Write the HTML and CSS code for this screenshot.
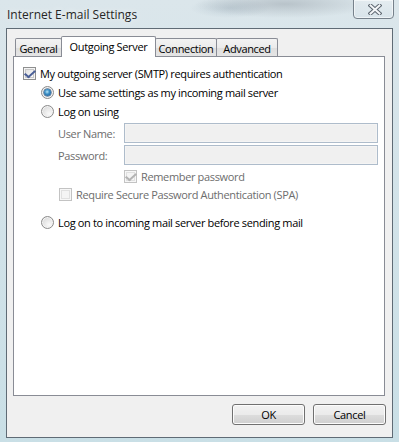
FILE: index.html
```html
<!DOCTYPE html>
<html>
<head>
<meta charset="utf-8">
<title>Internet E-mail Settings</title>
<link rel="stylesheet" href="styles.css">
</head>
<body>
<div class="window">
  <div class="titlebar">
    <span class="title">Internet E-mail Settings</span>
    <div class="close">
      <svg width="14" height="11" viewBox="0 0 14 11">
        <path d="M2.5 1.5 L11.5 9.5 M11.5 1.5 L2.5 9.5" stroke="#5d6670" stroke-width="4" stroke-linecap="square" fill="none"/>
        <path d="M2.5 1.5 L11.5 9.5 M11.5 1.5 L2.5 9.5" stroke="#f4f6f8" stroke-width="2" stroke-linecap="square" fill="none"/>
      </svg>
    </div>
  </div>
  <div class="client">
    <div class="tabs">
      <div class="tab t-general">General</div>
      <div class="tab active t-outgoing">Outgoing Server</div>
      <div class="tab t-connection">Connection</div>
      <div class="tab t-advanced">Advanced</div>
    </div>
    <div class="panel">
      <div class="row r-auth">
        <span class="cb checked"></span>
        <span class="label">My outgoing server (SMTP) requires authentication</span>
      </div>
      <div class="row r-radio">
        <span class="radio on"></span>
        <span class="label">Use same settings as my incoming mail server</span>
      </div>
      <div class="row r-radio">
        <span class="radio"></span>
        <span class="label">Log on using</span>
      </div>
      <div class="field">
        <span class="flabel">User Name:</span>
        <span class="input"></span>
      </div>
      <div class="field">
        <span class="flabel">Password:</span>
        <span class="input"></span>
      </div>
      <div class="row r-remember disabled">
        <span class="cb checked dis"></span>
        <span class="label">Remember password</span>
      </div>
      <div class="row r-spa disabled">
        <span class="cb dis"></span>
        <span class="label">Require Secure Password Authentication (SPA)</span>
      </div>
      <div class="row r-radio r-last">
        <span class="radio"></span>
        <span class="label">Log on to incoming mail server before sending mail</span>
      </div>
    </div>
    <div class="buttons">
      <div class="btn">OK</div>
      <div class="btn">Cancel</div>
    </div>
  </div>
</div>
</body>
</html>
```

FILE: styles.css
```css
* { box-sizing: border-box; }
html, body { margin: 0; padding: 0; }
body {
  width: 399px;
  height: 442px;
  overflow: hidden;
  font-family: "Open Sans", "Noto Sans", sans-serif;
  font-size: 11px;
  letter-spacing: -0.35px;
  color: #000;
}
.window {
  width: 399px;
  height: 442px;
  padding: 0 6px 4px 6px;
  display: flex;
  flex-direction: column;
  background:
    radial-gradient(ellipse 90px 14px at 285px 4px, rgba(120,130,140,0.35), rgba(120,130,140,0) 100%),
    radial-gradient(ellipse 40px 10px at 230px 8px, rgba(140,160,175,0.3), rgba(140,160,175,0) 100%),
    linear-gradient(to bottom, #dbe6eb 0%, #d3e3e9 40%, #c9dfe6 100%);
}
.titlebar {
  height: 28px;
  flex: none;
  display: flex;
  justify-content: space-between;
  align-items: flex-start;
}
.title {
  margin-top: 6px;
  margin-left: 1px;
  font-size: 12px;
  letter-spacing: 0;
  color: #262626;
  text-shadow: 0 0 6px rgba(255,255,255,0.9);
}
.close {
  width: 41px;
  height: 20px;
  margin-top: -1px;
  margin-right: -1px;
  border: 1px solid #76818b;
  border-radius: 0 0 4px 4px;
  background: linear-gradient(to bottom, rgba(235,241,245,0.6), rgba(215,226,233,0.6));
  box-shadow: inset 0 0 0 1px rgba(255,255,255,0.55);
  display: flex;
  align-items: center;
  justify-content: center;
  padding-left: 2px;
  padding-top: 1px;
}
.close svg { display: block; }
.client {
  flex: 1;
  border: 1px solid #5f6b75;
  background: #f0f0f0;
  padding: 7px 7px 12px 6px;
  display: flex;
  flex-direction: column;
}
.tabs {
  display: flex;
  align-items: flex-start;
  height: 21px;
  margin-bottom: -1px;
  padding-left: 2px;
  position: relative;
  z-index: 1;
}
.tab {
  height: 18px;
  margin-top: 2px;
  border: 1px solid #898c95;
  border-bottom: none;
  background: linear-gradient(to bottom, #f3f3f3 0%, #ebebeb 50%, #dedede 51%, #e5e5e5 100%);
  border-radius: 2px 2px 0 0;
  display: flex;
  align-items: center;
  justify-content: center;
  padding-top: 1px;
  color: #000;
}
.t-general { width: 47px; }
.t-outgoing { width: 95px; }
.t-connection { width: 62px; margin-left: -1px; }
.t-advanced { width: 62px; margin-left: -1px; }
.tab.active {
  height: 21px;
  margin-top: 0;
  margin-left: -1px;
  background: #fff;
  padding-top: 0;
  padding-bottom: 2px;
}
.panel {
  height: 340px;
  flex: none;
  border: 1px solid #898c95;
  background: #fff;
  padding: 7px 6px 0 9px;
  display: flex;
  flex-direction: column;
}
.row {
  height: 19px;
  display: flex;
  align-items: center;
}
.label { white-space: nowrap; }
.r-auth .label { margin-left: 4px; }
.r-radio { margin-left: 18px; }
.r-radio .label { margin-left: 4px; }
.r-last { margin-top: 9px; }
.r-remember { margin-left: 101px; margin-top: 2px; height: 18px; }
.r-spa { margin-left: 36px; }
.r-remember .label, .r-spa .label { margin-left: 4px; }
.disabled { color: #6d6d6d; }
.field {
  height: 20px;
  margin-top: 2px;
  display: flex;
  align-items: center;
  margin-left: 35px;
}
.flabel {
  width: 66px;
  flex: none;
  color: #6d6d6d;
}
.input {
  flex: 1;
  height: 20px;
  border: 1px solid #aebccb;
  background: #f0f0f0;
  box-shadow: inset 0 0 0 1px #f4f4f4;
}
.cb {
  width: 13px;
  height: 13px;
  flex: none;
  border: 1px solid #8e8f8f;
  background: linear-gradient(135deg, #d9d9d9 0%, #f3f3f3 60%, #fbfbfb 100%);
  box-shadow: inset 0 0 0 1px #f4f4f4, inset 0 0 0 2px #c8c8c8;
  position: relative;
}
.cb.checked::after {
  content: "";
  position: absolute;
  left: 3px;
  top: 0px;
  width: 4px;
  height: 8px;
  border-right: 2px solid #4a5f97;
  border-bottom: 2px solid #4a5f97;
  transform: rotate(40deg) skewX(-8deg);
}
.cb.dis {
  border-color: #c3c3c3;
  background: #f4f4f4;
  box-shadow: inset 0 0 0 1px #f7f7f7, inset 0 0 0 2px #e0e0e0;
}
.cb.dis.checked::after {
  border-color: #b3b3b3;
}
.radio {
  width: 13px;
  height: 13px;
  flex: none;
  border-radius: 50%;
  border: 1px solid #8b8b8b;
  background: radial-gradient(circle at 65% 70%, #fafafa 0%, #e6e6e6 50%, #cfcfcf 100%);
  box-shadow: inset 0 0 0 1px #f4f4f4;
  position: relative;
}
.radio.on::after {
  content: "";
  position: absolute;
  left: 2px;
  top: 2px;
  width: 7px;
  height: 7px;
  border-radius: 50%;
  background: radial-gradient(circle at 45% 40%, #b8e6f8 0%, #3d90c6 40%, #134b86 100%);
  box-shadow: 0 0 0 0.5px #23466f;
}
.buttons {
  margin-top: 8px;
  margin-right: -1px;
  display: flex;
  justify-content: flex-end;
  gap: 8px;
}
.btn {
  width: 73px;
  height: 21px;
  border: 1px solid #707070;
  border-radius: 3px;
  background: linear-gradient(to bottom, #f2f2f2 0%, #ebebeb 50%, #dddddd 51%, #cfcfcf 100%);
  box-shadow: inset 0 0 0 1px #fcfcfc;
  display: flex;
  align-items: center;
  justify-content: center;
  color: #000;
}
```
